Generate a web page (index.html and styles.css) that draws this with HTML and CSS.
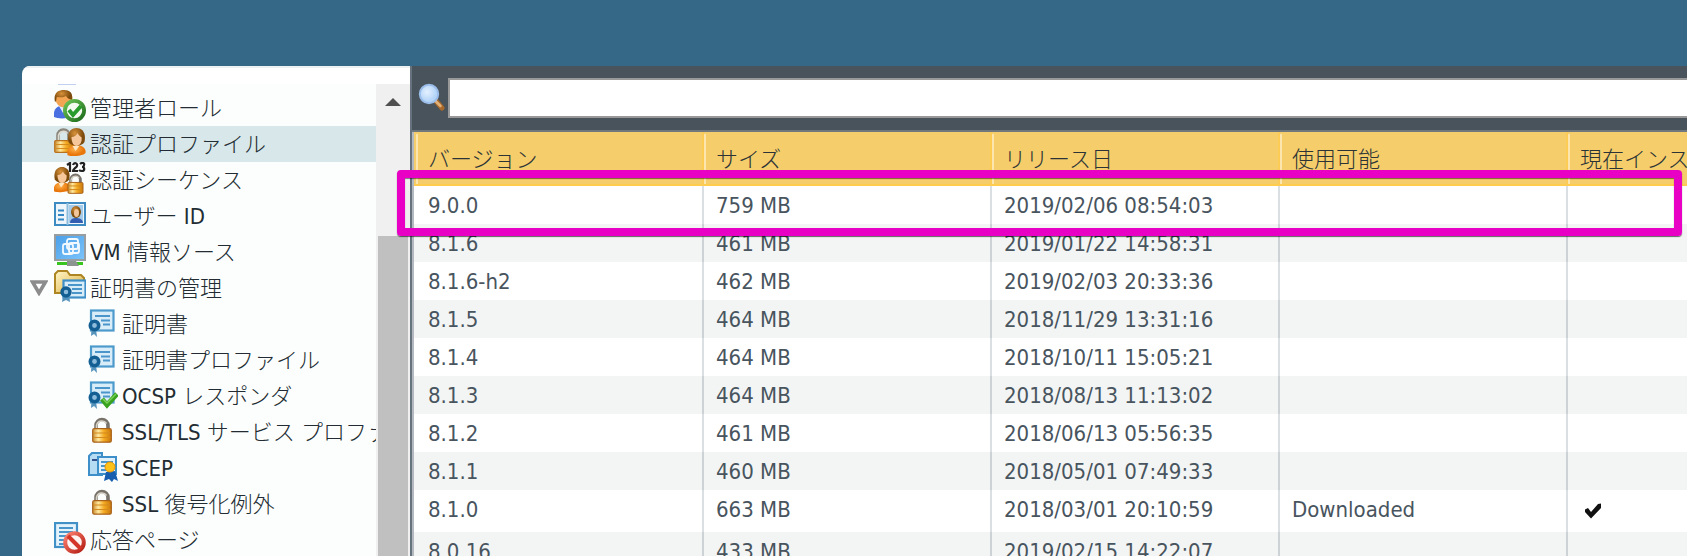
FILE: index.html
```html
<!DOCTYPE html>
<html lang="ja">
<head>
<meta charset="utf-8">
<title>ソフトウェア</title>
<link rel="stylesheet" href="styles.css">
</head>
<body>
<svg class="defs" aria-hidden="true">
  <defs>
    <linearGradient id="gold" x1="0" x2="1" y1="0" y2="0"><stop offset="0" stop-color="#c98a2e"/><stop offset=".3" stop-color="#ffe9a0"/><stop offset=".6" stop-color="#f5ab22"/><stop offset="1" stop-color="#c8770c"/></linearGradient>
    <radialGradient id="hair" cx=".4" cy=".3"><stop offset="0" stop-color="#d9923a"/><stop offset="1" stop-color="#7d4b0c"/></radialGradient>
    <radialGradient id="coat" cx=".4" cy=".4"><stop offset="0" stop-color="#ffb04a"/><stop offset="1" stop-color="#e8760a"/></radialGradient>
    <linearGradient id="green" x1="0" x2="1" y1="0" y2="1"><stop offset="0" stop-color="#6cc455"/><stop offset="1" stop-color="#1d6b1c"/></linearGradient>
    <linearGradient id="red" x1="0" x2="1" y1="0" y2="1"><stop offset="0" stop-color="#ff8272"/><stop offset="1" stop-color="#b21d12"/></linearGradient>
    <linearGradient id="sky" x1="0" x2="1" y1="0" y2="1"><stop offset="0" stop-color="#4a9fe8"/><stop offset="1" stop-color="#7cc4fb"/></linearGradient>
    <linearGradient id="folder" x1="0" x2="1" y1="0" y2="1"><stop offset="0" stop-color="#fff6c8"/><stop offset="1" stop-color="#dcae3d"/></linearGradient>
    <radialGradient id="lens" cx=".4" cy=".4"><stop offset="0" stop-color="#e4f1ff"/><stop offset="1" stop-color="#b3d4f8"/></radialGradient>
    <symbol id="i-lock" viewBox="0 0 20 26">
      <path d="M4 13V8.500a6 6 0 0 1 12 0V13" fill="none" stroke="#77726a" stroke-width="3.600"/>
      <path d="M4.500 12V8.500a5.500 5.500 0 0 1 10-2" fill="none" stroke="#d6d2c8" stroke-width="1.600"/>
      <rect x=".7" y="11.700" width="18.600" height="13.500" rx="1.500" fill="url(#gold)" stroke="#a9621a" stroke-width="1.200"/>
      <path d="M1.500 16h17M1.500 20.500h17" stroke="#d48a1c" stroke-width="1.200"/>
    </symbol>
    <symbol id="i-person" viewBox="0 0 20 28">
      <path d="M1 27c-1-7 3-10 9-10s10 4 9 8c-2 3-15 4-18 2z" fill="url(#coat)"/>
      <path d="M6 18l3 5 4-5z" fill="#ffe5c0"/>
      <path d="M2 14C0 4 5 0 10 0s10 4 8 14c-3 5-13 5-16 0z" fill="url(#hair)"/>
      <path d="M5 9c3 0 5-2 6-4 1 2 3 4 4 4 1 5-2 9-5 9s-5-4-5-9z" fill="#f6c79a"/>
    </symbol>
    <symbol id="i-cert" viewBox="0 0 28 28">
      <rect x="3" y="1.500" width="22.500" height="20" fill="#d9edf9" stroke="#4b9acb" stroke-width="2.200"/>
      <path d="M7 7h15M13 11.500h9M15 15.500h7" stroke="#4a96cb" stroke-width="2.200"/>
      <path d="M3.500 20L3 27l3-2 3 3-1-8z" fill="#5794bd"/>
      <circle cx="6.500" cy="16.500" r="4.200" fill="#8dbbdc" stroke="#135f93" stroke-width="3.600"/>
    </symbol>
    <symbol id="i-role" viewBox="0 0 32 32">
      <path d="M0 27c-1-8 3-11 8-11s10 5 10 10c-4 3-14 3-18 1z" fill="#4a6fe0"/>
      <path d="M5 16l4 7 5-6z" fill="#e6ecff"/>
      <circle cx="10" cy="9" r="8.500" fill="#f3a553"/>
      <path d="M1 12C-1 3 4 0 10 0c7 0 9 4 8 10-3-1-5-2-6-4-3 2-7 1-9 1-1 1 0 4-2 5z" fill="url(#hair)"/>
      <circle cx="20.500" cy="20.500" r="9.600" fill="#f3fbf0" stroke="url(#green)" stroke-width="3.800"/>
      <path d="M15 20l4 5 8-9" fill="none" stroke="#279b2b" stroke-width="4"/>
    </symbol>
    <symbol id="i-auth" viewBox="0 0 32 32">
      <path d="M4 16V9.500a5.500 5.500 0 0 1 11 0V16" fill="none" stroke="#8a867c" stroke-width="3.600"/>
      <path d="M4.500 15V9.500a5 5 0 0 1 9-2" fill="none" stroke="#dedbd2" stroke-width="1.600"/>
      <rect x=".7" y="14.700" width="19" height="11.600" rx="1" fill="url(#gold)" stroke="#b9711c" stroke-width="1.200"/>
      <path d="M1.500 18.500h17M1.500 22.500h17" stroke="#d48a1c" stroke-width="1.200"/>
      <use href="#i-person" x="12" y="2" width="21" height="28"/>
    </symbol>
    <symbol id="i-seq" viewBox="0 0 32 32">
      <use href="#i-person" x="-1" y="4" width="18" height="27"/>
      <use href="#i-lock" x="13" y="11" width="17" height="21"/>
      <path d="M13 3l3-2v9m3-7c1-3 5-2 4 1-1 2-4 3-4 5h5m2-7c2-2 5-1 4 1 0 1-1 2-2 2 3 0 3 4 0 4-1 0-2 0-3-1" fill="none" stroke="#222" stroke-width="2.200"/>
    </symbol>
    <symbol id="i-user" viewBox="0 0 32 32">
      <rect x="1" y="5" width="30" height="22" fill="#eef6fb" stroke="#3d8bc0" stroke-width="2"/>
      <path d="M4 12.500h6M4 17h6M4 21.500h6" stroke="#3587c3" stroke-width="1.800"/>
      <path d="M13.500 5v22" stroke="#8bbcdb" stroke-width="2"/>
      <rect x="15" y="7" width="14" height="18" fill="#a6ccec"/>
      <path d="M16 25c0-4 3-5 6-5s7 1 7 5z" fill="#345eb2"/>
      <ellipse cx="22" cy="14" rx="5" ry="6" fill="url(#hair)"/>
      <ellipse cx="22.500" cy="15" rx="2.500" ry="4" fill="#f2c69b"/>
    </symbol>
    <symbol id="i-vm" viewBox="0 0 32 32">
      <rect x="1" y="1" width="30" height="25" fill="url(#sky)" stroke="#989e9f" stroke-width="2"/>
      <path d="M3 28h26v3H3z" fill="#39c51d"/>
      <path d="M13 27h9l3 5H13z" fill="#8c9490"/>
      <rect x="13" y="5" width="11" height="10" rx="2" fill="none" stroke="#f2faff" stroke-width="1.800"/>
      <rect x="9" y="10" width="10" height="10" rx="2" fill="none" stroke="#f2faff" stroke-width="1.800"/>
      <rect x="15" y="9" width="10" height="10" rx="2" fill="none" stroke="#f2faff" stroke-width="1.800"/>
    </symbol>
    <symbol id="i-certs" viewBox="0 0 32 32">
      <path d="M1 23V4l3-3h9l3 4h11l3 3v15z" fill="url(#folder)" stroke="#ad8623" stroke-width="2"/>
      <rect x="9.500" y="10.500" width="22" height="17" fill="#d9edf9" stroke="#3e8fc8" stroke-width="2.200"/>
      <path d="M14 15h14M18 19h10M18 23h10" stroke="#4a96cb" stroke-width="2"/>
      <path d="M9 25l-1 7 4-2 4 2-1-8z" fill="#5794bd"/>
      <circle cx="12" cy="22" r="4" fill="#8dbbdc" stroke="#135f93" stroke-width="3.400"/>
    </symbol>
    <symbol id="i-ocsp" viewBox="0 0 30 28">
      <use href="#i-cert" width="28" height="28"/>
      <path d="M14 18l5 6 10-11" fill="none" stroke="#39a31f" stroke-width="5"/>
      <path d="M15 18l4 4 9-9" fill="none" stroke="#7ad158" stroke-width="1.500"/>
    </symbol>
    <symbol id="i-scep" viewBox="0 0 30 30">
      <path d="M1 4l3-3h10v22H1z" fill="#b5dcf3" stroke="#3d8fca" stroke-width="2"/>
      <path d="M4 8h5" stroke="#33508c" stroke-width="2"/>
      <rect x="10" y="5" width="18" height="17" fill="#e0f1fb" stroke="#3d8fca" stroke-width="2"/>
      <path d="M13 10h12M13 14h7M13 18h7" stroke="#4a96cb" stroke-width="2"/>
      <path d="M18 20l-2 9 5-2 3 3 2-3 4 2-3-10z" fill="#175fae"/>
      <circle cx="22" cy="15" r="5" fill="#ffc21a" stroke="#e39208" stroke-width="1"/>
    </symbol>
    <symbol id="i-page" viewBox="0 0 32 32">
      <rect x="1" y="1" width="22" height="24" fill="#e4f2fb" stroke="#4291c6" stroke-width="2.200"/>
      <path d="M5 6h14M5 10h14M5 14h9M5 18h6M5 22h5" stroke="#4a96cb" stroke-width="1.800"/>
      <circle cx="20.500" cy="20.500" r="9.300" fill="#fff4f1" stroke="url(#red)" stroke-width="4"/>
      <path d="M14 14l13 13" stroke="#d33628" stroke-width="4"/>
    </symbol>
    <symbol id="i-search" viewBox="0 0 28 28">
      <path d="M18 18l6 7" stroke="#a9692c" stroke-width="5" stroke-linecap="round"/>
      <path d="M17.500 18l5 5" stroke="#e2b179" stroke-width="2.500" stroke-linecap="round"/>
      <circle cx="11" cy="11" r="9.200" fill="url(#lens)" stroke="#9bbdea" stroke-width="2"/>
    </symbol>
  </defs>
</svg>
<div class="app">
  <nav class="sidebar" aria-label="デバイス">
    <div class="sidebar-top"></div>
    <div class="sidebar-body">
      <ul class="tree">
        <li class="peek"></li>
        <li class="node"><svg class="icon"><use href="#i-role"/></svg><a href="#">管理者ロール</a></li>
        <li class="node selected"><svg class="icon"><use href="#i-auth"/></svg><a href="#">認証プロファイル</a></li>
        <li class="node"><svg class="icon"><use href="#i-seq"/></svg><a href="#">認証シーケンス</a></li>
        <li class="node"><svg class="icon"><use href="#i-user"/></svg><a href="#">ユーザー<span class="latin"> ID</span></a></li>
        <li class="node"><svg class="icon"><use href="#i-vm"/></svg><a href="#"><span class="latin">VM </span>情報ソース</a></li>
        <li class="node parent"><button class="toggle" aria-label="折りたたむ"><svg viewBox="0 0 18 16"><path d="M2.500 2h13L9 13z" fill="#fff" stroke="#8c8c8c" stroke-width="3.600"/></svg></button><svg class="icon"><use href="#i-certs"/></svg><a href="#">証明書の管理</a></li>
        <li class="node child"><svg class="icon"><use href="#i-cert" width="28" height="28" y="3"/></svg><a href="#">証明書</a></li>
        <li class="node child"><svg class="icon"><use href="#i-cert" width="28" height="28" y="3"/></svg><a href="#">証明書プロファイル</a></li>
        <li class="node child"><svg class="icon"><use href="#i-ocsp" width="30" height="28" y="3"/></svg><a href="#"><span class="latin">OCSP </span>レスポンダ</a></li>
        <li class="node child"><svg class="icon"><use href="#i-lock" width="20" height="26" x="4" y="3"/></svg><a href="#"><span class="latin">SSL/TLS </span>サービス<span class="latin"> </span>プロファイル</a></li>
        <li class="node child"><svg class="icon"><use href="#i-scep" width="30" height="30" y="2"/></svg><a href="#"><span class="latin">SCEP</span></a></li>
        <li class="node child"><svg class="icon"><use href="#i-lock" width="20" height="26" x="4" y="3"/></svg><a href="#"><span class="latin">SSL </span>復号化例外</a></li>
        <li class="node"><svg class="icon"><use href="#i-page"/></svg><a href="#">応答ページ</a></li>
      </ul>
      <div class="scrollbar">
        <svg class="arrow" viewBox="0 0 16 8"><path d="M0 8L8 0l8 8z" fill="#505050"/></svg>
        <div class="thumb"></div>
      </div>
    </div>
  </nav>
  <main class="content">
    <div class="toolbar">
      <svg class="search-icon"><use href="#i-search"/></svg>
      <input class="search" type="text" aria-label="検索">
    </div>
    <div class="grid">
      <table>
        <thead>
          <tr><th>バージョン</th><th>サイズ</th><th>リリース日</th><th>使用可能</th><th>現在インストール済み</th></tr>
        </thead>
        <tbody>
          <tr><td>9.0.0</td><td>759 MB</td><td>2019/02/06 08:54:03</td><td></td><td></td></tr>
          <tr><td>8.1.6</td><td>461 MB</td><td>2019/01/22 14:58:31</td><td></td><td></td></tr>
          <tr><td>8.1.6-h2</td><td>462 MB</td><td>2019/02/03 20:33:36</td><td></td><td></td></tr>
          <tr><td>8.1.5</td><td>464 MB</td><td>2018/11/29 13:31:16</td><td></td><td></td></tr>
          <tr><td>8.1.4</td><td>464 MB</td><td>2018/10/11 15:05:21</td><td></td><td></td></tr>
          <tr><td>8.1.3</td><td>464 MB</td><td>2018/08/13 11:13:02</td><td></td><td></td></tr>
          <tr><td>8.1.2</td><td>461 MB</td><td>2018/06/13 05:56:35</td><td></td><td></td></tr>
          <tr><td>8.1.1</td><td>460 MB</td><td>2018/05/01 07:49:33</td><td></td><td></td></tr>
          <tr class="installed"><td>8.1.0</td><td>663 MB</td><td>2018/03/01 20:10:59</td><td>Downloaded</td><td><svg class="check" viewBox="0 0 16 16"><path d="M0 6.500L3 5l3 4 7-8 3-.5V5L6 15.500 0 9z" fill="#111"/></svg></td></tr>
          <tr><td>8.0.16</td><td>433 MB</td><td>2019/02/15 14:22:07</td><td></td><td></td></tr>
        </tbody>
      </table>
    </div>
  </main>
</div>
<div class="highlight"></div>
</body>
</html>
```

FILE: styles.css
```css
* {
  box-sizing: border-box;
}

body {
  margin: 0;
  height: 100vh;
  overflow: hidden;
  position: relative;
  background: #346886;
  color: #222c32;
  font: 22px/32px "DejaVu Sans Condensed", "Noto Sans", "Noto Sans CJK JP", sans-serif;
}

.defs {
  position: absolute;
  width: 0;
  height: 0;
}

.app {
  display: flex;
  height: 100vh;
  padding: 66px 0 0 22px;
}

.sidebar {
  display: flex;
  flex-direction: column;
  flex: 0 0 388px;
  border-top-left-radius: 8px;
  background: #fff;
  overflow: hidden;
}

.sidebar-top {
  flex: 0 0 18px;
  border-top: 2px solid #eef1f2;
}

.sidebar-body {
  display: flex;
  flex: 1;
  min-height: 0;
}

.tree {
  flex: 1;
  min-width: 0;
  margin: 0;
  padding: 0;
  list-style: none;
  background: #fcfefd;
  overflow: hidden;
  font-family: "Noto Sans CJK JP Light", "Noto Sans CJK JP", sans-serif;
  font-weight: 300;
}

.latin {
  font-family: "DejaVu Sans Condensed", "Noto Sans", sans-serif;
  font-weight: 400;
  line-height: 0;
  white-space: pre;
}

.peek {
  height: 6px;
  padding-left: 36px;
}

.peek::before {
  content: "";
  display: block;
  width: 18px;
  height: 1px;
  background: #c3cff0;
}

.node {
  display: flex;
  align-items: center;
  gap: 4px;
  height: 36px;
  padding: 0 0 4px 32px;
  white-space: nowrap;
}

.node.parent {
  padding-left: 8px;
}

.node.child {
  padding-left: 66px;
}

.selected {
  background: #d8e7ea;
}

.node a {
  color: inherit;
  text-decoration: none;
}

.icon {
  flex: none;
  width: 32px;
  height: 32px;
}

.child .icon {
  width: 30px;
}

.toggle {
  flex: none;
  width: 20px;
  height: 16px;
  margin-top: 4px;
  padding: 0;
  border: 0;
  background: none;
}

.toggle svg {
  display: block;
  width: 18px;
  height: 16px;
}

.scrollbar {
  display: flex;
  flex-direction: column;
  align-items: center;
  flex: 0 0 34px;
  padding: 14px 2px 0;
  background: #f0f0f0;
}

.arrow {
  flex: none;
  width: 16px;
  height: 8px;
  margin-bottom: 130px;
}

.thumb {
  flex: 1;
  width: 100%;
  background: #c0c0c0;
}

.content {
  display: flex;
  flex-direction: column;
  flex: 1;
  min-width: 0;
  border-left: 2px solid #66737f;
  overflow: hidden;
}

.toolbar {
  display: flex;
  gap: 2px;
  flex: 0 0 66px;
  padding: 12px 0 12px 6px;
  border-bottom: 2px solid #70777d;
  background: #48535b;
}

.search-icon {
  flex: none;
  width: 28px;
  height: 28px;
  margin-top: 5px;
}

.search {
  flex: 1;
  min-width: 0;
  height: 40px;
  border: 2px solid #999;
  border-right: 0;
  border-radius: 0;
  background: #fff;
  font: inherit;
}

.grid {
  flex: 1;
  border-left: 2px solid #b4b9c0;
  background: #fff;
  overflow: hidden;
}

table {
  width: 1442px;
  table-layout: fixed;
  border-spacing: 0;
  color: #48545e;
}

th,
td {
  width: 288px;
  padding: 2px 0 0 12px;
  line-height: 36px;
  text-align: left;
  white-space: nowrap;
}

th:first-child,
td:first-child {
  width: 290px;
  padding-left: 14px;
}

th {
  height: 54px;
  padding-top: 0;
  padding-bottom: 2px;
  border-right: 2px solid #fccb55;
  border-bottom: 2px solid #ffcc50;
  background: linear-gradient(#fde6ae, #fde6ae) 0 2px / 2px 50px no-repeat #f5cd6a;
  color: #2b3336;
  font-family: "Noto Sans CJK JP Light", "Noto Sans CJK JP", sans-serif;
  font-weight: 300;
}

th:first-child {
  background-position: 2px 2px;
}

td {
  height: 38px;
  border-right: 2px solid #dadfe4;
}

tbody tr:nth-child(even) td {
  background: #f3f4f4;
  border-right-color: #cdd2d7;
}

.installed td {
  height: 42px;
  padding-bottom: 4px;
}

.check {
  display: block;
  width: 16px;
  height: 16px;
  margin-top: 2px;
  margin-left: 5px;
}

.highlight {
  position: absolute;
  top: 170px;
  left: 397px;
  right: 5px;
  height: 66px;
  border: 8px solid #e800c5;
  border-radius: 4px;
  box-shadow: 0 1px 1px rgba(0, 0, 0, .6), inset 0 1px 1px rgba(0, 0, 0, .5);
  pointer-events: none;
}
```
